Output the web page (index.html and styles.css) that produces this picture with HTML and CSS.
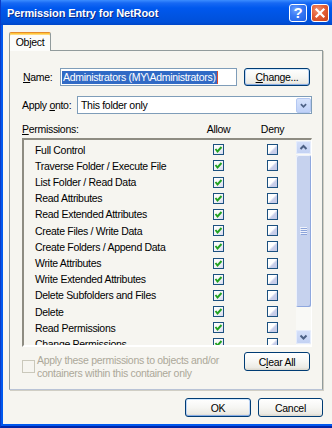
FILE: index.html
```html
<!DOCTYPE html>
<html>
<head>
<meta charset="utf-8">
<title>Permission Entry for NetRoot</title>
<link rel="stylesheet" href="styles.css">
</head>
<body>
<div class="window">
  <div class="titlebar">
    <span class="title">Permission Entry for NetRoot</span>
    <div class="tbtns">
      <div class="tbtn help">?</div>
      <div class="tbtn close"><svg width="16" height="16" viewBox="0 0 16 16"><path d="M4.5 4.5 L11.5 11.5 M11.5 4.5 L4.5 11.5" stroke="#fff" stroke-width="2.2" stroke-linecap="square" fill="none"/></svg></div>
    </div>
  </div>
  <div class="client">
    <div class="tabs"><div class="tab">Object</div></div>
    <div class="panel">
      <div class="row">
        <span class="lbl lbl-name"><u>N</u>ame:</span>
        <div class="textbox"><span class="sel">Administrators (MY\Administrators)</span><span class="caret"></span></div>
        <div class="btn btn-default btn-change"><u>C</u>hange...</div>
      </div>
      <div class="row row-apply">
        <span class="lbl lbl-apply">Apply <u>o</u>nto:</span>
        <div class="combo">
          <span class="combo-text">This folder only</span>
          <div class="dd"><svg width="15" height="15" viewBox="0 0 15 15"><path d="M4.5 6 L7.5 9 L10.5 6" stroke="#4D6185" stroke-width="2" fill="none"/></svg></div>
        </div>
      </div>
      <div class="perm-head">
        <span><u>P</u>ermissions:</span>
        <span class="colh">Allow</span>
        <span></span>
        <span class="colh">Deny</span>
      </div>
      <div class="list">
        <div class="items">
          <div class="item"><span>Full Control</span><span class="cb on"><svg viewBox="0 0 9 9"><path d="M1.5 4 L3.5 6.5 L7.5 2" /></svg></span><span></span><span class="cb"></span></div>
          <div class="item"><span>Traverse Folder / Execute File</span><span class="cb on"><svg viewBox="0 0 9 9"><path d="M1.5 4 L3.5 6.5 L7.5 2" /></svg></span><span></span><span class="cb"></span></div>
          <div class="item"><span>List Folder / Read Data</span><span class="cb on"><svg viewBox="0 0 9 9"><path d="M1.5 4 L3.5 6.5 L7.5 2" /></svg></span><span></span><span class="cb"></span></div>
          <div class="item"><span>Read Attributes</span><span class="cb on"><svg viewBox="0 0 9 9"><path d="M1.5 4 L3.5 6.5 L7.5 2" /></svg></span><span></span><span class="cb"></span></div>
          <div class="item"><span>Read Extended Attributes</span><span class="cb on"><svg viewBox="0 0 9 9"><path d="M1.5 4 L3.5 6.5 L7.5 2" /></svg></span><span></span><span class="cb"></span></div>
          <div class="item"><span>Create Files / Write Data</span><span class="cb on"><svg viewBox="0 0 9 9"><path d="M1.5 4 L3.5 6.5 L7.5 2" /></svg></span><span></span><span class="cb"></span></div>
          <div class="item"><span>Create Folders / Append Data</span><span class="cb on"><svg viewBox="0 0 9 9"><path d="M1.5 4 L3.5 6.5 L7.5 2" /></svg></span><span></span><span class="cb"></span></div>
          <div class="item"><span>Write Attributes</span><span class="cb on"><svg viewBox="0 0 9 9"><path d="M1.5 4 L3.5 6.5 L7.5 2" /></svg></span><span></span><span class="cb"></span></div>
          <div class="item"><span>Write Extended Attributes</span><span class="cb on"><svg viewBox="0 0 9 9"><path d="M1.5 4 L3.5 6.5 L7.5 2" /></svg></span><span></span><span class="cb"></span></div>
          <div class="item"><span>Delete Subfolders and Files</span><span class="cb on"><svg viewBox="0 0 9 9"><path d="M1.5 4 L3.5 6.5 L7.5 2" /></svg></span><span></span><span class="cb"></span></div>
          <div class="item"><span>Delete</span><span class="cb on"><svg viewBox="0 0 9 9"><path d="M1.5 4 L3.5 6.5 L7.5 2" /></svg></span><span></span><span class="cb"></span></div>
          <div class="item"><span>Read Permissions</span><span class="cb on"><svg viewBox="0 0 9 9"><path d="M1.5 4 L3.5 6.5 L7.5 2" /></svg></span><span></span><span class="cb"></span></div>
          <div class="item"><span>Change Permissions</span><span class="cb on"><svg viewBox="0 0 9 9"><path d="M1.5 4 L3.5 6.5 L7.5 2" /></svg></span><span></span><span class="cb"></span></div>
        </div>
        <div class="vscroll">
          <div class="sbtn"><svg width="15" height="13" viewBox="0 0 15 13"><path d="M4.5 8 L7.5 5 L10.5 8" stroke="#4D6185" stroke-width="2" fill="none"/></svg></div>
          <div class="thumb"><svg width="7" height="8" viewBox="0 0 7 8"><path d="M0 0.5 H7 M0 2.5 H7 M0 4.5 H7 M0 6.5 H7" stroke="#EEF2FC" stroke-width="1"/><path d="M1 1.5 H7 M1 3.5 H7 M1 5.5 H7 M1 7.5 H7" stroke="#8CA4DA" stroke-width="1"/></svg></div>
          <div class="track"></div>
          <div class="sbtn"><svg width="15" height="14" viewBox="0 0 15 14"><path d="M4.5 5.5 L7.5 8.5 L10.5 5.5" stroke="#4D6185" stroke-width="2" fill="none"/></svg></div>
        </div>
      </div>
      <div class="bottom">
        <div class="chk-dis">
          <span class="cbox-dis"></span>
          <span class="dis-text">Apply these permissions to objects and/or<br>containers within this container only</span>
        </div>
        <div class="btn btn-clear">C<u>l</u>ear All</div>
      </div>
    </div>
    <div class="actions">
      <div class="btn btn-default btn-ok">OK</div>
      <div class="btn btn-cancel">Cancel</div>
    </div>
  </div>
</div>
</body>
</html>
```

FILE: styles.css
```css
* { box-sizing: border-box; }
html, body { margin: 0; padding: 0; }
body {
  width: 332px;
  height: 428px;
  overflow: hidden;
  background: #0058EE;
  font-family: "Liberation Sans", Arial, sans-serif;
  font-size: 10.5px;
  letter-spacing: -0.3px;
  color: #000;
}
u { text-decoration: underline; text-underline-offset: 1px; }

.window {
  display: flex;
  flex-direction: column;
  width: 336px;
  height: 428px;
  border-left: 1px solid #0A3BC8;
  border-bottom: 2px solid #0025A8;
}

.titlebar {
  height: 25px;
  flex: none;
  display: flex;
  align-items: center;
  padding-left: 6px;
  background: linear-gradient(#3C8DFF 0, #1769F4 3px, #0058EE 8px, #0054E3 60%, #0050DA 88%, #0046C8 100%);
}
.title {
  flex: 1;
  font-family: "Liberation Sans", Arial, sans-serif;
  font-weight: bold;
  font-size: 11px;
  letter-spacing: -0.1px;
  color: #fff;
  text-shadow: 1px 1px 0 #0A2A8A;
  white-space: nowrap;
}
.tbtns { display: flex; gap: 4px; margin-right: 7px; }
.tbtn {
  width: 18px;
  height: 18px;
  border: 1px solid #fff;
  border-radius: 3px;
  display: flex;
  align-items: center;
  justify-content: center;
  color: #fff;
}
.help {
  background: radial-gradient(circle at 35% 30%, #6FA2FF 0, #3A7BF5 40%, #1E5FE6 100%);
  font-family: "Liberation Sans", Arial, sans-serif;
  font-weight: bold;
  font-size: 15px;
  letter-spacing: 0;
  line-height: 16px;
}
.close {
  background: radial-gradient(circle at 35% 30%, #F29270 0, #E35F36 45%, #C8401A 100%);
}

.client {
  flex: 1;
  display: flex;
  flex-direction: column;
  background: #F6F5F0;
  border-left: 2px solid #0058EE;
  border-bottom: 2px solid #0058EE;
  padding: 7px 11px 7px 6px;
}

.tabs { display: flex; height: 18px; flex: none; }
.tab {
  position: relative;
  z-index: 1;
  width: 42px;
  height: 19px;
  border: 1px solid #919B9C;
  border-top: 1px solid #E68B2C;
  border-bottom: none;
  border-radius: 2px 2px 0 0;
  box-shadow: inset 0 1px 0 #FFC73C, inset 0 2px 0 #FFD97A;
  background: #FCFCFA;
  text-align: center;
  line-height: 17px;
  padding-top: 1px;
}

.panel {
  flex: 1;
  display: flex;
  flex-direction: column;
  width: 314px;
  border: 1px solid #919B9C;
  border-bottom-color: #B9C3D6;
  box-shadow: 1px 1px 0 #D0CEC4;
  background: #F6F5F0;
  padding: 17px 10px 0 12px;
}

.row { display: flex; align-items: center; height: 18px; flex: none; }
.row-apply { margin-top: 10px; }
.lbl { white-space: nowrap; }
.lbl-name { width: 38px; padding-left: 1px; }
.lbl-apply { width: 55px; }

.textbox {
  width: 177px;
  height: 18px;
  border: 1px solid #7F9DB9;
  background: #fff;
  padding-left: 1px;
  display: flex;
  align-items: center;
}
.sel {
  background: #316AC5;
  color: #fff;
  line-height: 13px;
  padding: 0 1px;
  white-space: nowrap;
}
.caret { width: 1px; height: 13px; background: #E04A2A; }

.btn {
  height: 19px;
  border: 1px solid #003C74;
  border-radius: 3px;
  background: linear-gradient(#FFFFFF 0, #F6F6F3 50%, #ECEBE5 85%, #D9D6CC 100%);
  display: flex;
  align-items: center;
  justify-content: center;
  white-space: nowrap;
}
.btn-default {
  box-shadow: inset 0 -1px 0 #89ADE4, inset 0 1px 0 #CEE7FF, inset 1px 0 0 #BCD4F6, inset -1px 0 0 #BCD4F6;
}
.btn-change { width: 66px; height: 18px; margin-left: 7px; }

.combo {
  width: 235px;
  height: 18px;
  border: 1px solid #7F9DB9;
  background: #fff;
  display: flex;
  align-items: center;
  padding-left: 3px;
}
.combo-text { flex: 1; }
.dd {
  width: 15px;
  height: 15px;
  border-radius: 2px;
  background: linear-gradient(#D7E3FC, #BFD1F8);
  border: 1px solid #B4C8F2;
  display: flex;
  align-items: center;
  justify-content: center;
}
.dd svg { display: block; }

.perm-head {
  display: grid;
  grid-template-columns: 176.5px 40px 14px 40px;
  height: 14px;
  line-height: 14px;
  margin-top: 8px;
  flex: none;
  white-space: nowrap;
}
.colh { text-align: center; }

.list {
  margin-top: 2px;
  width: 290px;
  height: 209px;
  flex: none;
  display: flex;
  border-style: solid;
  border-width: 2px 1px 2px 2px;
  border-color: #8E8C82 #FFFFFF #FFFFFF #8E8C82;
  background: #F6F5F0;
  overflow: hidden;
}
.items {
  flex: 1;
  padding-top: 1.6px;
  overflow: hidden;
}
.item {
  display: grid;
  grid-template-columns: 178px 11px 43px 11px;
  align-items: center;
  height: 16.2px;
  padding-left: 11px;
  white-space: nowrap;
}
.cb {
  width: 11px;
  height: 11px;
  border: 1px solid #1C5180;
  background: linear-gradient(135deg, #FFFFFF 0, #FFFFFF 45%, #C9CFEA 60%, #C4CAE6 100%);
  display: flex;
  align-items: center;
  justify-content: center;
}
.cb.on { background: linear-gradient(135deg, #FFFFFF 0, #F4F4F8 50%, #D6DAF0 100%); }
.cb svg { width: 9px; height: 9px; display: block; }
.cb svg path { stroke: #21A121; stroke-width: 1.9; fill: none; }

.vscroll {
  width: 15px;
  flex: none;
  display: flex;
  flex-direction: column;
  background: #F9F9F6;
  padding: 1px 0 1px;
}
.sbtn {
  flex: none;
  border-radius: 2px;
  background: linear-gradient(#D5E0FA, #C2D1F3);
  box-shadow: inset 0 0 0 1px #E6EDFC;
  display: flex;
  align-items: center;
  justify-content: center;
}
.sbtn:first-child { height: 13px; }
.sbtn:last-child { height: 14px; }
.sbtn svg { display: block; }
.thumb {
  margin-top: 1px;
  height: 152px;
  flex: none;
  border-radius: 2px;
  background: #C6D2EE;
  box-shadow: inset 1px 1px 0 #EEF2FC, inset -1px -1px 0 #8FA8DE;
  display: flex;
  align-items: center;
  justify-content: center;
}
.thumb svg { display: block; }
.track { flex: 1; }

.bottom {
  margin-top: 5px;
  display: flex;
  align-items: flex-start;
  justify-content: space-between;
  padding-right: 2px;
}
.chk-dis { display: flex; align-items: flex-start; }
.cbox-dis {
  width: 13px;
  height: 13px;
  margin-top: 8px;
  border: 1px solid #CAC8BB;
  background: #F6F5F0;
  flex: none;
}
.dis-text {
  margin-left: 2px;
  line-height: 13px;
  padding-top: 1.5px;
  color: #ACA899;
  white-space: nowrap;
}
.btn-clear { width: 66px; }

.actions {
  margin-top: 8px;
  display: flex;
  justify-content: flex-end;
  gap: 7px;
  flex: none;
  width: 314px;
}
.btn-ok { width: 66px; }
.btn-cancel { width: 65px; }
```
